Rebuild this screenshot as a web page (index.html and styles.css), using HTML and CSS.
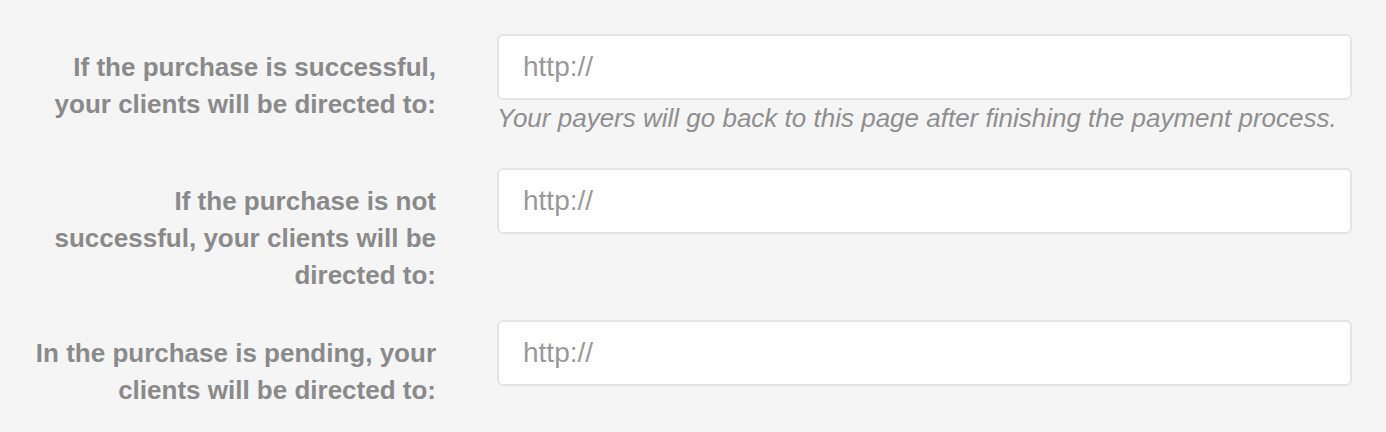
FILE: index.html
```html
<!DOCTYPE html>
<html lang="en">
<head>
<meta charset="utf-8">
<title>Redirect URLs</title>
<link rel="stylesheet" href="styles.css">
</head>
<body>
<form class="form">
  <div class="group group-help">
    <label class="label" for="u1">If the purchase is successful,<br>your clients will be directed to:</label>
    <div class="field">
      <input class="input" id="u1" type="text" placeholder="http://">
      <p class="help">Your payers will go back to this page after finishing the payment process.</p>
    </div>
  </div>
  <div class="group">
    <label class="label" for="u2">If the purchase is not<br>successful, your clients will be<br>directed to:</label>
    <div class="field">
      <input class="input" id="u2" type="text" placeholder="http://">
    </div>
  </div>
  <div class="group">
    <label class="label" for="u3">In the purchase is pending, your<br>clients will be directed to:</label>
    <div class="field">
      <input class="input" id="u3" type="text" placeholder="http://">
    </div>
  </div>
</form>
</body>
</html>
```
FILE: styles.css
```css
html, body {
  margin: 0;
  padding: 0;
  background: #f5f5f5;
}
body {
  font-family: "Liberation Sans", Arial, Helvetica, sans-serif;
}
.form {
  padding: 34px 34px 0 32px;
}
.group {
  display: grid;
  grid-template-columns: 404px 1fr;
  column-gap: 61px;
  align-items: start;
  margin-bottom: 26px;
}
.group-help {
  margin-bottom: 31px;
}
.label {
  display: block;
  text-align: right;
  font-weight: bold;
  font-size: 26px;
  line-height: 37px;
  color: #8a8a8a;
  padding-top: 15px;
  white-space: nowrap;
}
.field {
  display: flex;
  flex-direction: column;
}
.input {
  box-sizing: border-box;
  width: 100%;
  height: 66px;
  margin: 0;
  border: 2px solid #e4e4e4;
  border-radius: 6px;
  background: #fff;
  padding: 0 24px;
  font-family: "Liberation Sans", Arial, Helvetica, sans-serif;
  font-size: 28px;
  color: #555;
  outline: none;
}
.input::placeholder {
  color: #999;
  opacity: 1;
}
.help {
  margin: 0;
  font-style: italic;
  font-size: 26px;
  line-height: 37px;
  color: #8f8f8f;
}
```
